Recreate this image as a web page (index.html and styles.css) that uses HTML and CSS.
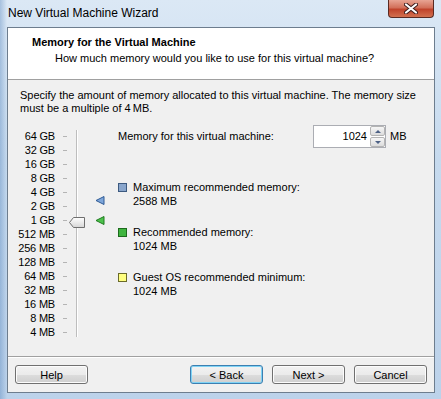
FILE: index.html
```html
<!DOCTYPE html>
<html lang="en">
<head>
  <meta charset="UTF-8">
  <title>New Virtual Machine Wizard</title>
  <link rel="stylesheet" href="styles.css">
</head>
<body>
  <div class="window">
    <div class="titlebar">
      <span class="title">New Virtual Machine Wizard</span>
      <div class="close-btn">
        <svg width="14" height="11" viewBox="0 0 14 11">
          <path d="M2 1.5 L12 9.5 M12 1.5 L2 9.5" stroke="#3a1a1a" stroke-width="4" stroke-linecap="round"/>
          <path d="M2 1.5 L12 9.5 M12 1.5 L2 9.5" stroke="#fff" stroke-width="2.2" stroke-linecap="round"/>
        </svg>
      </div>
    </div>

    <div class="client">
      <div class="header">
        <div class="header-title">Memory for the Virtual Machine</div>
        <div class="header-sub">How much memory would you like to use for this virtual machine?</div>
      </div>

      <div class="body">
        <p class="desc">Specify the amount of memory allocated to this virtual machine. The memory size must be a multiple of 4&#8201;MB.</p>

        <div class="main">
          <div class="slider">
            <div class="track"></div>
            <div class="row"><span class="lbl">64 GB</span><span class="tick"></span></div>
            <div class="row"><span class="lbl">32 GB</span><span class="tick"></span></div>
            <div class="row"><span class="lbl">16 GB</span><span class="tick"></span></div>
            <div class="row"><span class="lbl">8 GB</span><span class="tick"></span></div>
            <div class="row"><span class="lbl">4 GB</span><span class="tick"></span></div>
            <div class="row"><span class="lbl">2 GB</span><span class="tick"></span></div>
            <div class="row"><span class="lbl">1 GB</span><span class="tick"></span></div>
            <div class="row"><span class="lbl">512 MB</span><span class="tick"></span></div>
            <div class="row"><span class="lbl">256 MB</span><span class="tick"></span></div>
            <div class="row"><span class="lbl">128 MB</span><span class="tick"></span></div>
            <div class="row"><span class="lbl">64 MB</span><span class="tick"></span></div>
            <div class="row"><span class="lbl">32 MB</span><span class="tick"></span></div>
            <div class="row"><span class="lbl">16 MB</span><span class="tick"></span></div>
            <div class="row"><span class="lbl">8 MB</span><span class="tick"></span></div>
            <div class="row"><span class="lbl">4 MB</span><span class="tick"></span></div>

            <svg class="marker" style="top: 67px" width="10" height="9" viewBox="0 0 10 9">
              <path d="M1 4.5 L9 0.5 L9 8.5 Z" fill="#7ea6da" stroke="#2f5a94" stroke-width="1"/>
            </svg>
            <svg class="marker" style="top: 87px" width="10" height="9" viewBox="0 0 10 9">
              <path d="M1 4.5 L9 0.5 L9 8.5 Z" fill="#4cc24c" stroke="#1f7a1f" stroke-width="1"/>
            </svg>
            <svg class="thumb" width="16" height="11" viewBox="0 0 16 11">
              <defs>
                <linearGradient id="tg" x1="0" y1="0" x2="0" y2="1">
                  <stop offset="0" stop-color="#ffffff"/>
                  <stop offset="1" stop-color="#d6d6d6"/>
                </linearGradient>
              </defs>
              <path d="M0.5 5.5 L4.5 0.5 L15.5 0.5 L15.5 10.5 L4.5 10.5 Z" fill="url(#tg)" stroke="#6f6f6f"/>
            </svg>
          </div>

          <div class="settings">
            <div class="mem-row">
              <span class="mem-label">Memory for this virtual machine:</span>
              <div class="spin">
                <span class="spin-value">1024</span>
                <div class="spin-btns">
                  <span class="spin-up"></span>
                  <span class="spin-down"></span>
                </div>
              </div>
              <span class="unit">MB</span>
            </div>

            <div class="legend">
              <div class="legend-item">
                <span class="swatch blue"></span>
                <div>
                  <div>Maximum recommended memory:</div>
                  <div>2588 MB</div>
                </div>
              </div>
              <div class="legend-item">
                <span class="swatch green"></span>
                <div>
                  <div>Recommended memory:</div>
                  <div>1024 MB</div>
                </div>
              </div>
              <div class="legend-item">
                <span class="swatch yellow"></span>
                <div>
                  <div>Guest OS recommended minimum:</div>
                  <div>1024 MB</div>
                </div>
              </div>
            </div>
          </div>
        </div>
      </div>

      <div class="footer">
        <button class="btn">Help</button>
        <span class="spacer"></span>
        <button class="btn focused">&lt; Back</button>
        <button class="btn">Next &gt;</button>
        <button class="btn">Cancel</button>
      </div>
    </div>
  </div>
</body>
</html>
```

FILE: styles.css
```css
body {
  margin: 0;
  font-family: 'Liberation Sans', Arial, sans-serif;
  font-size: 11px;
  color: #000;
}
.window {
  width: 441px;
  height: 399px;
  box-sizing: border-box;
  background:
    linear-gradient(to right, rgba(70, 120, 180, 0.35) 0, rgba(70, 120, 180, 0) 7px),
    linear-gradient(to bottom, #dbe8f5 0%, #c6daee 40%, #bcd2ea 100%);
  display: flex;
  flex-direction: column;
  overflow: hidden;
}
.titlebar {
  height: 27px;
  display: flex;
  align-items: flex-start;
  justify-content: space-between;
}
.title {
  font-size: 12px;
  margin: 6px 0 0 8px;
  color: #000;
}
.close-btn {
  width: 46px;
  height: 18px;
  margin-right: 7px;
  box-sizing: border-box;
  border: 1px solid #5a2a22;
  border-top: none;
  border-radius: 0 0 4px 4px;
  background: linear-gradient(to bottom, #e8a493 0%, #d2705a 45%, #c0432b 55%, #d2704f 100%);
  display: flex;
  align-items: center;
  justify-content: center;
}
.client {
  margin: 0 6px 0 7px;
  height: 366px;
  box-sizing: border-box;
  border: 1px solid #6d7d8e;
  background: #f0f0f0;
  display: flex;
  flex-direction: column;
}
.header {
  height: 52px;
  background: #fff;
  border-bottom: 1px solid #a0a0a0;
  box-sizing: border-box;
  padding: 7px 0 0 24px;
}
.header-title {
  font-weight: bold;
  line-height: 14px;
}
.header-sub {
  line-height: 14px;
  margin: 2px 0 0 23px;
}
.body {
  flex: 1;
  padding: 9px 12px 0 12px;
}
.desc {
  margin: 0;
  line-height: 13px;
}
.main {
  display: flex;
  margin-top: 14px;
}
.slider {
  position: relative;
  width: 110px;
  margin-left: -12px;
}
.track {
  position: absolute;
  left: 68px;
  top: 1px;
  width: 1px;
  height: 207px;
  background: #bdbdbd;
  border-right: 1px solid #fff;
}
.row {
  display: flex;
  align-items: center;
  height: 14px;
}
.lbl {
  width: 47px;
  text-align: right;
  white-space: nowrap;
  letter-spacing: -0.2px;
}
.tick {
  width: 4px;
  height: 1px;
  margin-left: 8px;
  background: #b4b4b4;
}
.marker {
  position: absolute;
  left: 87px;
}
.thumb {
  position: absolute;
  left: 61px;
  top: 88px;
}
.settings {
  flex: 1;
}
.mem-row {
  display: flex;
  align-items: center;
  height: 14px;
}
.mem-label {
  width: 195px;
}
.spin {
  width: 73px;
  height: 23px;
  box-sizing: border-box;
  border: 1px solid #abadb3;
  background: #fff;
  display: flex;
}
.spin-value {
  flex: 1;
  text-align: right;
  padding-right: 3px;
  line-height: 21px;
}
.spin-btns {
  width: 15px;
  display: flex;
  flex-direction: column;
  gap: 1px;
}
.spin-up,
.spin-down {
  flex: 1;
  border: 1px solid #b4b4b4;
  border-radius: 2px;
  background: linear-gradient(to bottom, #f6f6f6, #dcdcdc);
  position: relative;
}
.spin-up::after,
.spin-down::after {
  content: "";
  position: absolute;
  left: 4px;
  top: 3px;
  border-left: 3px solid transparent;
  border-right: 3px solid transparent;
}
.spin-up::after {
  border-bottom: 3px solid #4d6185;
}
.spin-down::after {
  border-top: 3px solid #4d6185;
}
.unit {
  margin-left: 4px;
}
.legend {
  margin-top: 37px;
  display: flex;
  flex-direction: column;
  gap: 17px;
}
.legend-item {
  display: flex;
  gap: 6px;
  line-height: 14px;
}
.swatch {
  width: 7px;
  height: 7px;
  margin-top: 3px;
  border: 1px solid #555;
}
.swatch.blue {
  background: #8aa6cc;
  border-color: #3d5a80;
}
.swatch.green {
  background: #3fb53f;
  border-color: #1d6a1d;
}
.swatch.yellow {
  background: #ffff80;
  border-color: #6b6b2a;
}
.footer {
  height: 36px;
  border-top: 1px solid #a0a0a0;
  box-shadow: inset 0 1px 0 #fff;
  display: flex;
  align-items: flex-start;
  padding: 8px 7px 0 7px;
  box-sizing: border-box;
  gap: 9px;
}
.spacer {
  flex: 1;
}
.btn {
  width: 73px;
  height: 19px;
  padding: 0;
  font-family: 'Liberation Sans', Arial, sans-serif;
  font-size: 11px;
  color: #000;
  border: 1px solid #707070;
  border-radius: 3px;
  background: linear-gradient(to bottom, #f2f2f2 0%, #ebebeb 50%, #dddddd 51%, #cfcfcf 100%);
  box-shadow: inset 0 0 0 1px #fcfcfc;
}
.btn.focused {
  border-color: #3c7fb1;
  box-shadow: inset 0 0 0 1px #7fd3f5;
}
```
